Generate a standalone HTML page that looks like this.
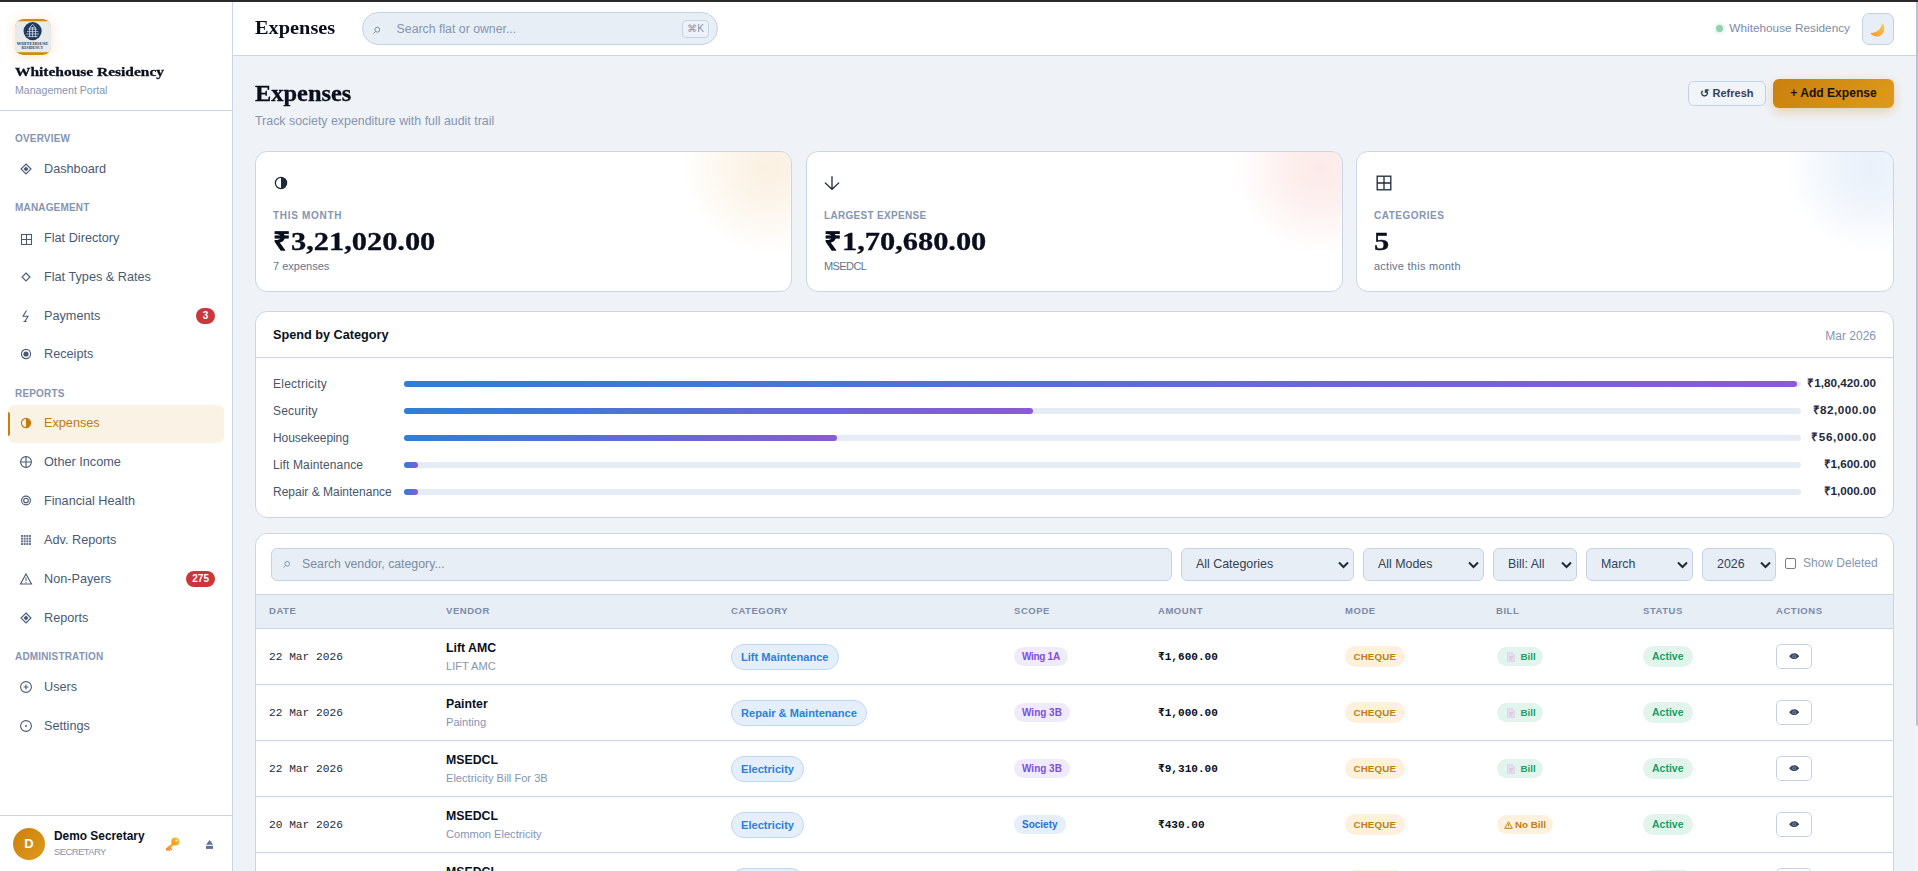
<!DOCTYPE html>
<html lang="en">
<head>
<meta charset="utf-8">
<title>Expenses - Whitehouse Residency</title>
<style>
*{box-sizing:border-box;margin:0;padding:0}
html,body{width:1918px;height:871px;overflow:hidden}
body{font-family:"Liberation Sans",Arial,sans-serif;font-size:13px;color:#0f172a;background:#eff3f8;position:relative}
.serif{font-family:"Liberation Serif","Times New Roman",serif;font-weight:700;-webkit-text-stroke:.3px currentColor;transform-origin:0 50%;white-space:nowrap}
.mono{font-family:"Liberation Mono","DejaVu Sans Mono",monospace}
.topbar{position:absolute;left:0;top:0;width:1918px;height:2px;background:#2a2a2a;z-index:50}
.scroll{position:absolute;left:1916px;top:2px;width:2px;height:724px;background:#b3c3d8;z-index:40;border-radius:0 0 0 2px}
.strack{position:absolute;left:1915px;top:56px;width:3px;height:815px;background:#f1f4f9;z-index:39}

/* ---------- sidebar ---------- */
.sidebar{position:absolute;left:0;top:0;width:233px;height:871px;background:#fff;border-right:1px solid #c9d6e6}
.brand{height:111px;border-bottom:1px solid #c9d6e6;padding:19px 15px 0 15px}
.logo{width:36px;height:36px;border-radius:8px;box-shadow:0 1px 12px rgba(217,119,6,.2);display:block}
.brand h1{font-size:13.5px;line-height:16px;margin-top:9px;color:#0a0f1e;transform:scaleX(1.145);width:131px}
.brand p{font-size:10.6px;line-height:14px;margin-top:2.5px;color:#8595b1}
.nav{padding:0 8px}
.nav h2{font-size:10px;font-weight:700;letter-spacing:.17px;color:#8595b1;height:14px;line-height:14px;position:relative;top:1px;margin:0 0 0 7px;text-transform:uppercase}
.nav h2{margin-top:12px;margin-bottom:5px}
.nav h2.first{margin-top:20.4px}
.nav a{display:flex;align-items:center;height:37.9px;margin-bottom:1px;padding-bottom:1px;border-radius:6px;padding-left:11px;color:#4a5a75;font-size:12.7px;text-decoration:none;position:relative}
.nav a .ic{width:14px;height:14px;margin-right:11px;flex:none;display:block}
.nav a.active{background:#faf2e5;color:#c27a0c}
.nav a.active::before{content:"";position:absolute;left:0;top:7px;width:2px;height:24px;background:#c8800c;border-radius:0 2px 2px 0}
.nav .badge{position:absolute;right:9px;top:11px;height:16px;min-width:19px;padding:0 6px;border-radius:8px;background:#c9373b;color:#fff;font-size:10px;font-weight:700;line-height:16px;text-align:center}
.user{position:absolute;left:0;top:815px;width:232px;height:56px;border-top:1px solid #c9d6e6;background:#fff}
.avatar{position:absolute;left:13px;top:12px;width:32px;height:32px;border-radius:50%;background:linear-gradient(135deg,#c9800d,#e09a1c);color:#fff;font-weight:700;font-size:13px;line-height:32px;text-align:center}
.user b{position:absolute;left:54px;top:12px;font-size:11.9px;line-height:16px;color:#0a0f1e}
.user small{position:absolute;left:54px;top:29px;font-size:9.5px;letter-spacing:-.6px;line-height:14px;color:#8595b1}

.user .key{position:absolute;left:165px;top:21.3px;width:16px;height:16px}
.user .eject{position:absolute;left:206px;top:24px;width:7.2px;height:9px}
/* ---------- header ---------- */
.header{position:absolute;left:233px;top:0;width:1683px;height:56px;background:#fff;border-bottom:1px solid #c9d6e6}
.header .title{position:absolute;left:22px;top:16px;font-size:18.3px;line-height:24px;color:#0a0f1e;transform:scaleX(1.113);-webkit-text-stroke:0}
.gsearch{position:absolute;left:129px;top:12px;width:356px;height:33px;border-radius:17px;background:#e8eef6;border:1px solid #c5d2e4}
.gsearch svg{position:absolute;left:9px;top:12.5px;width:9px;height:9px}
.gsearch span{position:absolute;left:33.6px;top:8px;font-size:12.3px;line-height:16px;color:#8595b1}
.gsearch kbd{position:absolute;right:8px;top:7px;width:27px;height:18px;border:1px solid #c5d2e4;border-radius:4px;font-family:inherit;font-size:10px;line-height:15px;text-align:center;color:#8595b1;background:#eef2f7}
.soc{position:absolute;right:66px;top:20px;font-size:11.8px;line-height:16px;color:#7b8ba6;white-space:nowrap}
.soc i{display:inline-block;width:7px;height:7px;border-radius:50%;background:#8fd3b0;margin-right:6px;vertical-align:0;box-shadow:0 0 4px #a7e0c3}
.theme{position:absolute;left:1629px;top:13px;width:32px;height:32px;border-radius:7px;background:#e8eef6;border:1px solid #c5d2e4}

/* ---------- main ---------- */
.main{position:absolute;left:233px;top:56px;width:1683px;height:815px;overflow:hidden}

.phead{position:absolute;left:22px;top:0;width:1639px;height:95px}
.phead h1{position:absolute;left:0;top:24px;font-size:22.4px;line-height:28px;color:#0a0f1e;transform:scaleX(1.09)}
.phead p{position:absolute;left:0;top:57px;font-size:12.4px;line-height:16px;color:#8595b1}
.btn{position:absolute;border-radius:6px;font-weight:700;white-space:nowrap;text-align:center}
.btn.ghost{left:1433px;top:25px;width:78px;height:25px;border:1px solid #c5d2e4;background:#f1f5fa;font-size:11px;line-height:23px;color:#334155}
.btn.primary{left:1518px;top:23px;width:121px;height:29px;background:linear-gradient(135deg,#c9800d,#de9a1d);font-size:12.1px;line-height:29px;color:#1a1206;box-shadow:0 4px 12px rgba(217,119,6,.3)}
.stats{position:absolute;left:22px;top:95px;width:1639px;height:141px}
.stat{position:absolute;top:0;width:537px;height:141px;background:#fff;border:1px solid #c9d6e6;border-radius:12px;overflow:hidden}
.stat .glow{position:absolute;right:-68px;top:-74px;width:180px;height:180px;border-radius:50%;opacity:.6;-webkit-mask-image:radial-gradient(circle,#000 0%,rgba(0,0,0,.75) 25%,transparent 68%);mask-image:radial-gradient(circle,#000 0%,rgba(0,0,0,.75) 25%,transparent 68%)}
.stat svg.si{position:absolute;left:17px;top:23px;width:16px;height:16px;color:#1e293b}
.stat .lbl{position:absolute;left:17px;top:57px;font-size:10px;line-height:14px;font-weight:700;letter-spacing:.7px;color:#8595b1;text-transform:uppercase}
.stat .val{position:absolute;left:17px;top:72.5px;font-size:25.4px;line-height:32px;color:#0a0f1e;transform:scaleX(1.197)}
.stat .sub{position:absolute;left:17px;top:107px;font-size:11px;line-height:14px;color:#64748b}
.card{position:absolute;left:22px;width:1639px;background:#fff;border:1px solid #c9d6e6;border-radius:12px;overflow:hidden}
.cat{top:255px;height:207px}
.cat .ch{height:46px;border-bottom:1px solid #c9d6e6;position:relative}
.cat .ch b{position:absolute;left:17px;top:15px;font-size:12.7px;line-height:16px;color:#0a0f1e}
.cat .ch span{position:absolute;right:17px;top:16px;font-size:12px;line-height:16px;color:#8595b1}
.cat ul{list-style:none;padding-top:12px}
.cat li{position:relative;height:27px}
.cat li span{position:absolute;left:17px;top:5.5px;font-size:12px;line-height:16px;color:#475569}
.cat li i{position:absolute;left:148px;top:11px;width:1397px;height:6px;border-radius:3px;background:#e6ecf5}
.cat li i u{position:absolute;left:0;top:0;height:6px;border-radius:3px;background:linear-gradient(90deg,#2f7fd6,#8a5ad8)}
.cat li b{position:absolute;right:17px;top:5px;font-size:11.7px;line-height:16px;color:#1e293b;font-weight:700}

.tbl{top:477px;height:360px;border-radius:12px}
.filters{position:relative;height:60px}
.fi{position:absolute;top:14px;height:33px;border:1px solid #c5d2e4;border-radius:6px;background:#e8eef6;font-size:12.4px;line-height:31px;color:#334155;padding-left:14px;white-space:nowrap}
.fi.search{left:15px;width:901px;color:#7b8ba6;padding-left:30px;font-size:12.3px}
.fi svg.chev{position:absolute;right:4px;top:12px;width:11px;height:8px}
.chk{position:absolute;left:1529px;top:24px;width:11px;height:11px;border:1px solid #767e8c;border-radius:2px;background:#fff}
.chkl{position:absolute;left:1547px;top:21px;font-size:12px;line-height:16px;color:#8595b1}
table{border-collapse:collapse;width:1639px;table-layout:fixed;position:absolute;left:-1px;top:60px}
th{height:34px;background:#e8eef6;border-top:1px solid #c9d6e6;border-bottom:1px solid #c9d6e6;text-align:left;padding:0 0 2px 14px;font-size:9.5px;font-weight:700;letter-spacing:.55px;color:#7b8ba6;text-transform:uppercase}
td{height:56px;border-bottom:1px solid #c9d6e6;padding:0 0 0 14px;vertical-align:middle;white-space:nowrap}
td.d{font-size:11.2px;color:#1e293b}
td.v b{display:block;font-size:12.3px;line-height:16px;color:#0a0f1e;margin-top:-.5px}
td.v small{display:block;font-size:11.1px;line-height:14px;color:#8595b1;margin-top:3px}
td.a{font-size:11.1px;font-weight:700;color:#0a0f1e}
.pill{display:inline-block;border-radius:13px;font-weight:700;vertical-align:middle}
.pc{position:relative;top:.5px;height:26px;line-height:24px;padding:0 9px;font-size:11.1px;background:#e4effb;border:1px solid #bdd7f4;color:#2f7fd6}
.ps{height:19px;line-height:19px;padding:0 8px;font-size:10px;background:#f0ebfb;color:#7c4fe0}
.ps.soc2{background:#e4effb;color:#2c6fd0}
.pm{height:21px;line-height:21px;padding:0 8.5px;font-size:9.8px;background:#fdf1de;color:#c27f14;letter-spacing:.1px}
.pb{height:19px;line-height:19px;padding:0 7px 0 9.5px;margin-left:1px;font-size:9.8px;background:#e2f5ec;color:#1f9d63}
.pb.no{background:#fdf1de;color:#c27f14;padding:0 7px}
.pa{height:21px;line-height:21px;padding:0 9px;font-size:10.5px;background:#e2f5ec;color:#1f9d63}
.eye{display:block;width:36px;height:25px;border:1px solid #c5d2e4;border-radius:5px;background:#fff;position:relative}
.eye svg{position:absolute;left:12px;top:8.2px;width:10.4px;height:6.4px}
</style>
</head>
<body>
<div class="topbar"></div>
<div class="strack"></div>
<div class="scroll"></div>

<aside class="sidebar">
  <div class="brand">
    <svg class="logo" viewBox="0 0 36 36"><rect width="36" height="36" rx="8" fill="#d38b12"/><rect y="2.3" width="36" height="30.9" fill="#e9eaec"/><circle cx="17.6" cy="12.1" r="9.1" fill="#213a5e"/><g stroke="#dfe5ee" stroke-width=".9" fill="none" opacity=".8"><path d="M17.6 5.2l-3 3.6h6zM13.2 10.2h8.8M12 12.6h11.2M11.2 15h12.8M12.6 17.6h10M14.6 9v9M17.6 8v10M20.6 9v9"/></g><text x="17.6" y="25.9" text-anchor="middle" textLength="31.5" lengthAdjust="spacingAndGlyphs" font-family="Liberation Serif,serif" font-weight="700" font-size="3.7" fill="#2b3954">WHITEHOUSE</text><text x="17.3" y="29.7" text-anchor="middle" textLength="21.5" lengthAdjust="spacingAndGlyphs" font-family="Liberation Serif,serif" font-weight="700" font-size="3.7" fill="#2b3954">RESIDENCY</text></svg>
    <h1 class="serif">Whitehouse Residency</h1>
    <p>Management Portal</p>
  </div>
  <nav class="nav">
    <h2 class="first">Overview</h2>
    <a href="#"><svg class="ic" viewBox="0 0 14 14" fill="none" stroke="currentColor" stroke-width="1.1"><path d="M7 2L12 7 7 12 2 7z"/><path d="M7 4.5L9.5 7 7 9.5 4.5 7z" fill="currentColor" stroke="none"/></svg><span>Dashboard</span></a>
    <h2>Management</h2>
    <a href="#"><svg class="ic" viewBox="0 0 14 14" fill="none" stroke="currentColor" stroke-width="1.1"><g transform="translate(0 1)"><rect x="2.5" y="2.5" width="10" height="10"/><path d="M7.5 2.5v10M2.5 7.5h10"/></g></svg><span>Flat Directory</span></a>
    <a href="#"><svg class="ic" viewBox="0 0 14 14" fill="none" stroke="currentColor" stroke-width="1.1"><path d="M7 3L11 7 7 11 3 7z"/></svg><span>Flat Types &amp; Rates</span></a>
    <a href="#"><svg class="ic" viewBox="0 0 14 14" fill="none" stroke="currentColor" stroke-width="1.1"><path d="M7.5 1.5L4 7.2h5L5.8 12.5M4.5 12.5h3"/></svg><span>Payments</span><span class="badge">3</span></a>
    <a href="#"><svg class="ic" viewBox="0 0 14 14" fill="none" stroke="currentColor" stroke-width="1.1"><circle cx="7" cy="7" r="4.6"/><circle cx="7" cy="7" r="2.6" fill="currentColor" stroke="none"/></svg><span>Receipts</span></a>
    <h2>Reports</h2>
    <a href="#" class="active"><svg class="ic" viewBox="0 0 14 14" fill="none" stroke="currentColor" stroke-width="1.1"><circle cx="7" cy="7" r="4.6"/><path d="M7 2.4a4.6 4.6 0 0 1 0 9.2z" fill="currentColor" stroke="none"/></svg><span>Expenses</span></a>
    <a href="#"><svg class="ic" viewBox="0 0 14 14" fill="none" stroke="currentColor" stroke-width="1.1"><circle cx="7" cy="7" r="5.4"/><path d="M7 1.6v10.8M1.6 7h10.8"/></svg><span>Other Income</span></a>
    <a href="#"><svg class="ic" viewBox="0 0 14 14" fill="none" stroke="currentColor" stroke-width="1.1"><circle cx="7" cy="6.5" r="4.4"/><circle cx="7" cy="6.5" r="2.3"/></svg><span>Financial Health</span></a>
    <a href="#"><svg class="ic" viewBox="0 0 14 14" fill="currentColor"><path d="M2 2h10v10H2z" opacity=".85"/><path d="M4.4 2v10M7 2v10M9.6 2v10M2 4.4h10M2 7h10M2 9.6h10" stroke="#fff" stroke-width=".7"/></svg><span>Adv. Reports</span></a>
    <a href="#"><svg class="ic" viewBox="0 0 14 14" fill="none" stroke="currentColor" stroke-width="1.1"><path d="M7 2L12.5 12h-11z"/><path d="M7 5.5v3.6M7 10v1" stroke-width="1"/></svg><span>Non-Payers</span><span class="badge">275</span></a>
    <a href="#"><svg class="ic" viewBox="0 0 14 14" fill="none" stroke="currentColor" stroke-width="1.1"><path d="M7 2L12 7 7 12 2 7z"/><path d="M7 4.5L9.5 7 7 9.5 4.5 7z" fill="currentColor" stroke="none"/></svg><span>Reports</span></a>
    <h2>Administration</h2>
    <a href="#"><svg class="ic" viewBox="0 0 14 14" fill="none" stroke="currentColor" stroke-width="1.1"><circle cx="7" cy="7" r="5.4"/><path d="M7 4.6v4.8M4.6 7h4.8"/></svg><span>Users</span></a>
    <a href="#"><svg class="ic" viewBox="0 0 14 14" fill="none" stroke="currentColor" stroke-width="1.1"><circle cx="7" cy="7" r="5.4"/><circle cx="7" cy="7" r="1" fill="currentColor" stroke="none"/></svg><span>Settings</span></a>
  </nav>
  <div class="user">
    <div class="avatar">D</div>
    <b>Demo Secretary</b>
    <small>SECRETARY</small>
    <svg class="key" viewBox="0 0 16 16"><defs><linearGradient id="kg" x1="1" y1="0" x2="0" y2="1"><stop offset="0" stop-color="#fdc92a"/><stop offset=".55" stop-color="#f9a826"/><stop offset="1" stop-color="#f58423"/></linearGradient></defs><path d="M8.6 6.4L2.3 12.3" stroke="url(#kg)" stroke-width="2.8" stroke-linecap="round"/><path d="M5.2 11.2l1.2 1.2M3.6 12.6l1 1" stroke="#f58a23" stroke-width="1.4" stroke-linecap="round"/><circle cx="10.3" cy="4.6" r="4" fill="url(#kg)"/><circle cx="11.5" cy="3.5" r=".9" fill="#fff6dc"/></svg>
    <svg class="eject" viewBox="0 0 8 9" preserveAspectRatio="none"><path d="M4 0L8 4.7H0z" fill="#5f7396"/><rect y="5.9" width="8" height="3" fill="#5f7396"/></svg>
  </div>
</aside>

<header class="header">
  <div class="title serif">Expenses</div>
  <div class="gsearch"><svg viewBox="0 0 10 10" fill="none" stroke="#7b8ba6" stroke-width="1.1"><circle cx="5.9" cy="4.1" r="2.7"/><path d="M3.9 6.1L1.6 8.4"/></svg><span>Search flat or owner...</span><kbd>⌘K</kbd></div>
  <div class="soc"><i></i>Whitehouse Residency</div>
  <div class="theme"><svg viewBox="0 0 32 32" style="position:absolute;left:-.6px;top:-.6px;width:32px;height:32px"><defs><linearGradient id="mg" x1="0" y1="1" x2="1" y2="0"><stop offset="0" stop-color="#f5922a"/><stop offset="1" stop-color="#f8cf52"/></linearGradient></defs><path d="M19.8 10.1A7.7 7.7 0 1 1 8.2 20A10.3 10.3 0 0 0 19.8 10.1Z" fill="url(#mg)"/></svg></div>
</header>

<main class="main">
  <section class="phead">
    <h1 class="serif">Expenses</h1>
    <p>Track society expenditure with full audit trail</p>
    <div class="btn ghost">↺ Refresh</div>
    <div class="btn primary">+ Add Expense</div>
  </section>
  <section class="stats">
    <div class="stat" style="left:0"><div class="glow" style="background:#f7e7cf"></div>
      <svg class="si" viewBox="0 0 16 16" fill="none" stroke="currentColor" stroke-width="1.3"><circle cx="8" cy="8" r="5.6"/><path d="M8 2.4a5.6 5.6 0 0 1 0 11.2z" fill="currentColor" stroke="none"/></svg>
      <div class="lbl">This Month</div><div class="val serif">₹3,21,020.00</div><div class="sub">7 expenses</div></div>
    <div class="stat" style="left:551px"><div class="glow" style="background:#f9dcd9"></div>
      <svg class="si" viewBox="0 0 16 16" fill="none" stroke="currentColor" stroke-width="1.3"><path d="M8 1.2v13M.9 7.6l7.1 6.7 7.1-6.7"/></svg>
      <div class="lbl" style="letter-spacing:.31px">Largest Expense</div><div class="val serif">₹1,70,680.00</div><div class="sub" style="letter-spacing:-.6px">MSEDCL</div></div>
    <div class="stat" style="left:1101px;width:538px"><div class="glow" style="background:#dbe7f6"></div>
      <svg class="si" style="left:18.5px" viewBox="0 0 16 16" fill="none" stroke="currentColor" stroke-width="1.3"><rect x="1.2" y="1.2" width="13.6" height="13.6"/><path d="M8 1.2v13.6M1.2 8h13.6"/></svg>
      <div class="lbl" style="letter-spacing:.5px">Categories</div><div class="val serif">5</div><div class="sub" style="letter-spacing:.25px">active this month</div></div>
  </section>
  <section class="card cat">
    <div class="ch"><b>Spend by Category</b><span>Mar 2026</span></div>
    <ul>
      <li><span style="letter-spacing:.25px">Electricity</span><i><u style="width:99.7%"></u></i><b>₹1,80,420.00</b></li>
      <li><span style="letter-spacing:.16px">Security</span><i><u style="width:45%"></u></i><b style="letter-spacing:.5px;margin-right:-.5px">₹82,000.00</b></li>
      <li><span style="letter-spacing:-.08px">Housekeeping</span><i><u style="width:31%"></u></i><b style="letter-spacing:.65px;margin-right:-.65px">₹56,000.00</b></li>
      <li><span style="letter-spacing:.13px">Lift Maintenance</span><i><u style="width:1%"></u></i><b>₹1,600.00</b></li>
      <li><span>Repair &amp; Maintenance</span><i><u style="width:1%"></u></i><b>₹1,000.00</b></li>
    </ul>
  </section>
  <section class="card tbl">
    <div class="filters">
      <div class="fi search"><svg viewBox="0 0 10 10" style="position:absolute;left:10px;top:11px;width:9px;height:9px" fill="none" stroke="#7b8ba6" stroke-width="1"><circle cx="5.8" cy="4.2" r="2.6"/><path d="M3.9 6.1L1.5 8.5"/></svg>Search vendor, category...</div>
      <div class="fi" style="left:925px;width:173px">All Categories<svg class="chev" viewBox="0 0 11 8" fill="none" stroke="#1e293b" stroke-width="2"><path d="M1 1.5l4.5 4.5 4.5-4.5"/></svg></div>
      <div class="fi" style="left:1107px;width:121px">All Modes<svg class="chev" viewBox="0 0 11 8" fill="none" stroke="#1e293b" stroke-width="2"><path d="M1 1.5l4.5 4.5 4.5-4.5"/></svg></div>
      <div class="fi" style="left:1237px;width:84px">Bill: All<svg class="chev" viewBox="0 0 11 8" fill="none" stroke="#1e293b" stroke-width="2"><path d="M1 1.5l4.5 4.5 4.5-4.5"/></svg></div>
      <div class="fi" style="left:1330px;width:107px">March<svg class="chev" viewBox="0 0 11 8" fill="none" stroke="#1e293b" stroke-width="2"><path d="M1 1.5l4.5 4.5 4.5-4.5"/></svg></div>
      <div class="fi" style="left:1446px;width:74px">2026<svg class="chev" viewBox="0 0 11 8" fill="none" stroke="#1e293b" stroke-width="2"><path d="M1 1.5l4.5 4.5 4.5-4.5"/></svg></div>
      <span class="chk"></span><span class="chkl">Show Deleted</span>
    </div>
    <table>
      <colgroup><col style="width:177px"><col style="width:285px"><col style="width:283px"><col style="width:144px"><col style="width:187px"><col style="width:151px"><col style="width:147px"><col style="width:133px"><col style="width:132px"></colgroup>
      <thead><tr><th>Date</th><th>Vendor</th><th>Category</th><th>Scope</th><th>Amount</th><th>Mode</th><th>Bill</th><th>Status</th><th>Actions</th></tr></thead>
      <tbody>
      <tr><td class="d mono">22 Mar 2026</td><td class="v"><b>Lift AMC</b><small>LIFT AMC</small></td><td><span class="pill pc">Lift Maintenance</span></td><td><span class="pill ps" style="letter-spacing:-.3px;padding-right:8.3px">Wing 1A</span></td><td class="a mono">₹1,600.00</td><td><span class="pill pm">CHEQUE</span></td><td><span class="pill pb"><svg viewBox="0 0 8 10" style="width:8px;height:10px;vertical-align:-1.5px;margin-right:6px"><path d="M.5.5h4.5l2.5 2.5v6.5h-7z" fill="#e9ddf0" stroke="#d8c8e2" stroke-width=".6"/><path d="M2 4.5h4M2 6h4M2 7.5h3" stroke="#c9b6d6" stroke-width=".6"/></svg>Bill</span></td><td><span class="pill pa">Active</span></td><td><span class="eye"><svg viewBox="0 0 11 7" preserveAspectRatio="none"><path d="M0.2 3.5C2 1 3.8.3 5.5.3S9 1 10.8 3.5C9 6 7.2 6.7 5.5 6.7S2 6 .2 3.5z" fill="#3b4a5f"/><circle cx="5.5" cy="3.5" r="1.9" fill="#7f8ea5"/><circle cx="5.5" cy="3.5" r="1.1" fill="#3b4a5f"/></svg></span></td></tr>
      <tr><td class="d mono">22 Mar 2026</td><td class="v"><b>Painter</b><small>Painting</small></td><td><span class="pill pc">Repair &amp; Maintenance</span></td><td><span class="pill ps">Wing 3B</span></td><td class="a mono">₹1,000.00</td><td><span class="pill pm">CHEQUE</span></td><td><span class="pill pb"><svg viewBox="0 0 8 10" style="width:8px;height:10px;vertical-align:-1.5px;margin-right:6px"><path d="M.5.5h4.5l2.5 2.5v6.5h-7z" fill="#e9ddf0" stroke="#d8c8e2" stroke-width=".6"/><path d="M2 4.5h4M2 6h4M2 7.5h3" stroke="#c9b6d6" stroke-width=".6"/></svg>Bill</span></td><td><span class="pill pa">Active</span></td><td><span class="eye"><svg viewBox="0 0 11 7" preserveAspectRatio="none"><path d="M0.2 3.5C2 1 3.8.3 5.5.3S9 1 10.8 3.5C9 6 7.2 6.7 5.5 6.7S2 6 .2 3.5z" fill="#3b4a5f"/><circle cx="5.5" cy="3.5" r="1.9" fill="#7f8ea5"/><circle cx="5.5" cy="3.5" r="1.1" fill="#3b4a5f"/></svg></span></td></tr>
      <tr><td class="d mono">22 Mar 2026</td><td class="v"><b>MSEDCL</b><small>Electricity Bill For 3B</small></td><td><span class="pill pc">Electricity</span></td><td><span class="pill ps">Wing 3B</span></td><td class="a mono">₹9,310.00</td><td><span class="pill pm">CHEQUE</span></td><td><span class="pill pb"><svg viewBox="0 0 8 10" style="width:8px;height:10px;vertical-align:-1.5px;margin-right:6px"><path d="M.5.5h4.5l2.5 2.5v6.5h-7z" fill="#e9ddf0" stroke="#d8c8e2" stroke-width=".6"/><path d="M2 4.5h4M2 6h4M2 7.5h3" stroke="#c9b6d6" stroke-width=".6"/></svg>Bill</span></td><td><span class="pill pa">Active</span></td><td><span class="eye"><svg viewBox="0 0 11 7" preserveAspectRatio="none"><path d="M0.2 3.5C2 1 3.8.3 5.5.3S9 1 10.8 3.5C9 6 7.2 6.7 5.5 6.7S2 6 .2 3.5z" fill="#3b4a5f"/><circle cx="5.5" cy="3.5" r="1.9" fill="#7f8ea5"/><circle cx="5.5" cy="3.5" r="1.1" fill="#3b4a5f"/></svg></span></td></tr>
      <tr><td class="d mono">20 Mar 2026</td><td class="v"><b>MSEDCL</b><small>Common Electricity</small></td><td><span class="pill pc">Electricity</span></td><td><span class="pill ps soc2">Society</span></td><td class="a mono">₹430.00</td><td><span class="pill pm">CHEQUE</span></td><td><span class="pill pb no"><svg viewBox="0 0 10 9" style="width:9px;height:8px;vertical-align:-.5px;margin-right:2px" fill="none" stroke="currentColor" stroke-width="1.1"><path d="M5 .9L9.3 8.3H.7z"/><path d="M5 3.3v2.5M5 6.5v.8" stroke-width="1"/></svg>No Bill</span></td><td><span class="pill pa">Active</span></td><td><span class="eye"><svg viewBox="0 0 11 7" preserveAspectRatio="none"><path d="M0.2 3.5C2 1 3.8.3 5.5.3S9 1 10.8 3.5C9 6 7.2 6.7 5.5 6.7S2 6 .2 3.5z" fill="#3b4a5f"/><circle cx="5.5" cy="3.5" r="1.9" fill="#7f8ea5"/><circle cx="5.5" cy="3.5" r="1.1" fill="#3b4a5f"/></svg></span></td></tr>
      <tr><td class="d mono">18 Mar 2026</td><td class="v"><b>MSEDCL</b><small>Electricity Bill</small></td><td><span class="pill pc">Electricity</span></td><td><span class="pill ps soc2">Society</span></td><td class="a mono">₹1,70,680.00</td><td><span class="pill pm">CHEQUE</span></td><td><span class="pill pb"><svg viewBox="0 0 8 10" style="width:8px;height:10px;vertical-align:-1.5px;margin-right:6px"><path d="M.5.5h4.5l2.5 2.5v6.5h-7z" fill="#e9ddf0" stroke="#d8c8e2" stroke-width=".6"/><path d="M2 4.5h4M2 6h4M2 7.5h3" stroke="#c9b6d6" stroke-width=".6"/></svg>Bill</span></td><td><span class="pill pa">Active</span></td><td><span class="eye"><svg viewBox="0 0 11 7" preserveAspectRatio="none"><path d="M0.2 3.5C2 1 3.8.3 5.5.3S9 1 10.8 3.5C9 6 7.2 6.7 5.5 6.7S2 6 .2 3.5z" fill="#3b4a5f"/><circle cx="5.5" cy="3.5" r="1.9" fill="#7f8ea5"/><circle cx="5.5" cy="3.5" r="1.1" fill="#3b4a5f"/></svg></span></td></tr>
      </tbody>
    </table>
  </section>
</main>
</body>
</html>
